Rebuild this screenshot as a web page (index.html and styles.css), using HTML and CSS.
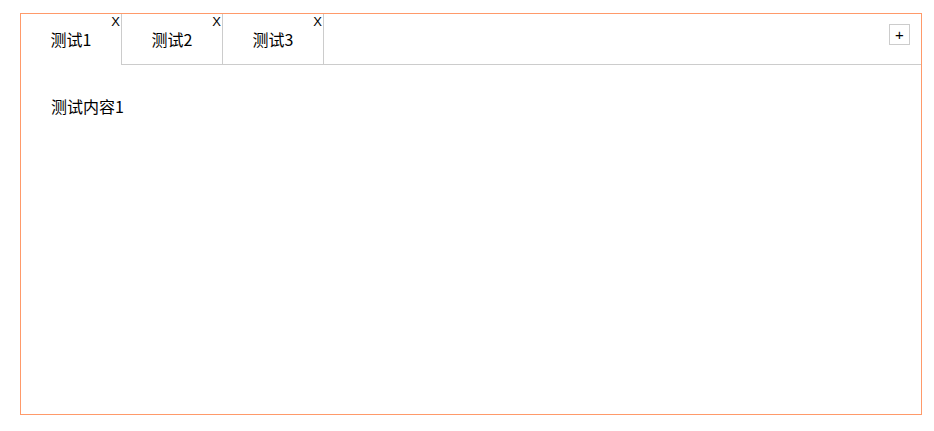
FILE: index.html
```html
<!DOCTYPE html>
<html lang="zh">
<head>
<meta charset="utf-8">
<link rel="stylesheet" href="styles.css">
</head>
<body>
<div class="tabs">
  <div class="tab-header">
    <div class="tab active">测试1<span class="close">X</span></div>
    <div class="tab">测试2<span class="close">X</span></div>
    <div class="tab">测试3<span class="close">X</span></div>
    <div class="spacer"></div>
    <button class="add">+</button>
  </div>
  <div class="tab-body">测试内容1</div>
</div>
</body>
</html>
```
FILE: styles.css
```css
html, body { margin: 0; padding: 0; background: #fff; }
body {
  padding: 13px 0 0 20px;
  font-family: "Noto Sans CJK SC", "Microsoft YaHei", sans-serif;
  font-size: 16px;
  color: #000;
}
.tabs {
  width: 900px;
  height: 400px;
  border: 1px solid #ff9a6a;
}
.tab-header {
  display: flex;
  align-items: flex-start;
  height: 50px;
  border-bottom: 1px solid #ccc;
}
.tab {
  position: relative;
  width: 100px;
  height: 50px;
  line-height: 50px;
  text-align: center;
  border-right: 1px solid #ccc;
  background: #fff;
}
.tab.active {
  height: 51px;
}
.close {
  position: absolute;
  top: 1px;
  right: 1px;
  font-family: "Liberation Sans", sans-serif;
  font-size: 13px;
  line-height: 13px;
}
.spacer { flex: 1; }
.add {
  margin: 10px 11px 0 0;
  width: 21px;
  height: 21px;
  padding: 0;
  border: 1px solid #ccc;
  background: #fff;
  font-family: "Liberation Sans", sans-serif;
  font-size: 15px;
  line-height: 18px;
  color: #000;
}
.tab-body {
  padding: 30px 30px;
  line-height: 22px;
}
```
